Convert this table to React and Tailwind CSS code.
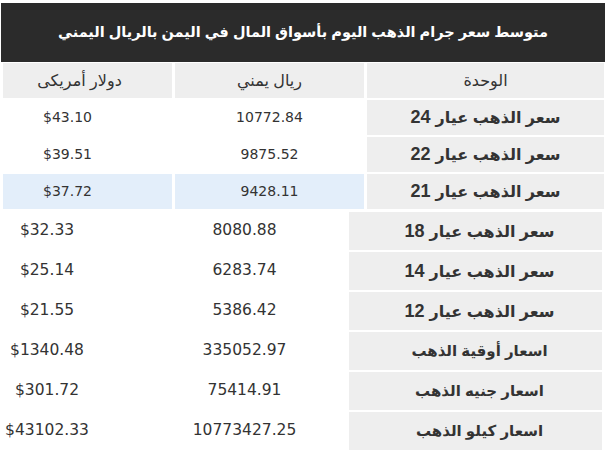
const ar = { fontFamily: 'Arial, "Liberation Sans", "DejaVu Sans", sans-serif' }
const num = { fontFamily: 'Tahoma, "DejaVu Sans", sans-serif' }

const topRows = [
  { label: "سعر الذهب عيار", k: "24", yer: "10772.84", usd: "$43.10" },
  { label: "سعر الذهب عيار", k: "22", yer: "9875.52", usd: "$39.51" },
  { label: "سعر الذهب عيار", k: "21", yer: "9428.11", usd: "$37.72", hl: true },
]

const bottomRows = [
  { label: "سعر الذهب عيار", k: "18", yer: "8080.88", usd: "$32.33" },
  { label: "سعر الذهب عيار", k: "14", yer: "6283.74", usd: "$25.14" },
  { label: "سعر الذهب عيار", k: "12", yer: "5386.42", usd: "$21.55" },
  { label: "اسعار أوقية الذهب", yer: "335052.97", usd: "$1340.48" },
  { label: "اسعار جنيه الذهب", yer: "75414.91", usd: "$301.72" },
  { label: "اسعار كيلو الذهب", yer: "10773427.25", usd: "$43102.33" },
]

function Label({ row }) {
  return (
    <span className={`font-bold text-[#333] whitespace-nowrap ${row.k ? "text-[16px]" : "text-[15px]"}`} style={ar}>
      {row.label}
      {row.k && <span className="text-[18px]"> {row.k}</span>}
    </span>
  )
}

export default function App() {
  return (
    <div className="w-[609px] h-[455px] bg-white overflow-hidden" dir="rtl">
      {/* title */}
      <div className="mt-[3px] mr-[4px] w-[604px] h-[59px] bg-[#2b2b2b] flex items-center justify-center">
        <span className="text-white font-bold text-[14.5px] whitespace-nowrap" style={ar}>
          متوسط سعر جرام الذهب اليوم بأسواق المال في اليمن بالريال اليمني
        </span>
      </div>

      {/* top table */}
      <div className="mt-[1px] flex flex-col gap-[2px] pr-[5px]">
        <div className="flex gap-[3px] h-[35px] text-[#333] text-[16px]" style={ar}>
          <div className="w-[237px] bg-[#eeeeee] flex items-center justify-center">الوحدة</div>
          <div className="w-[189px] bg-[#eeeeee] flex items-center justify-center">ريال يمني</div>
          <div className="w-[169px] bg-[#eeeeee] flex items-center justify-center pr-[16px]">دولار أمريكى</div>
        </div>
        {topRows.map((r) => (
          <div key={r.k} className="flex gap-[3px] h-[35px]">
            <div className="w-[237px] bg-[#eeeeee] flex items-center justify-center">
              <Label row={r} />
            </div>
            <div
              className={`w-[189px] flex items-center justify-center text-[14px] text-[#333] ${r.hl ? "bg-[#e3eefa]" : "bg-white"}`}
              style={num}
            >
              {r.yer}
            </div>
            <div
              className={`w-[169px] flex items-center justify-center pr-[40px] text-[14px] text-[#333] ${r.hl ? "bg-[#e3eefa]" : "bg-white"}`}
              style={num}
            >
              <span dir="ltr">{r.usd}</span>
            </div>
          </div>
        ))}
      </div>

      {/* bottom table */}
      <div className="mt-[3px] flex flex-col gap-[2px] pr-[7px]">
        {bottomRows.map((r) => (
          <div key={r.label + (r.k || "")} className="flex h-[38px]">
            <div className="w-[253px] bg-[#eeeeee] flex items-center justify-center pl-[8px]">
              <Label row={r} />
            </div>
            <div className="w-[255px] flex items-center justify-center pl-[46px] text-[15.5px] text-[#333]" style={num}>
              {r.yer}
            </div>
            <div className="w-[94px] flex items-center justify-center text-[15.5px] text-[#333]" style={num}>
              <span dir="ltr">{r.usd}</span>
            </div>
          </div>
        ))}
      </div>
    </div>
  )
}
